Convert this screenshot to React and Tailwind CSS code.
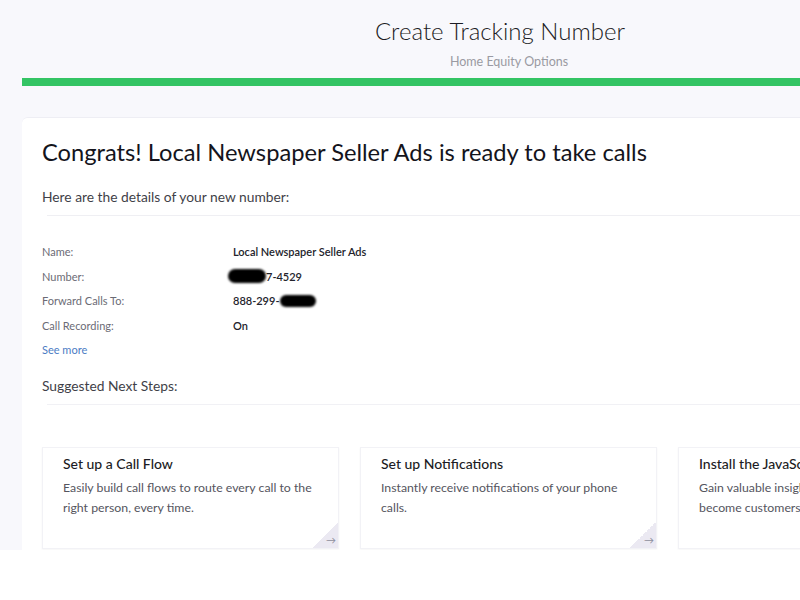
import React from "react";

const details = [
  { label: "Name:", value: "Local Newspaper Seller Ads" },
  { label: "Number:", value: "number" },
  { label: "Forward Calls To:", value: "forward" },
  { label: "Call Recording:", value: "On" },
];

const steps = [
  {
    title: "Set up a Call Flow",
    text: "Easily build call flows to route every call to the right person, every time.",
  },
  {
    title: "Set up Notifications",
    text: "Instantly receive notifications of your phone calls.",
  },
  {
    title: "Install the JavaScript Snippet",
    text: "Gain valuable insights into which visitors become customers.",
  },
];

const Blob = ({ className }) => (
  <span className={`inline-block bg-black rounded-full blur-[1px] ${className}`} />
);

const App = () => {
  return (
    <div
      className="w-[800px] h-[600px] overflow-hidden bg-white"
      style={{ fontFamily: "Lato, 'Noto Sans', sans-serif" }}
    >
      <div className="h-[550px] bg-[#f8f8fc] overflow-hidden">
        <div className="w-[956px] ml-[22px]">
          {/* header */}
          <div className="flex flex-col items-center pt-[15px]">
            <h1 className="text-[24px] leading-[32px] font-light text-[#1c1c24]">
              Create Tracking Number
            </h1>
            <p className="ml-[18px] text-[12.5px] leading-[18px] mt-[6px] text-[#9a9aa2]">
              Home Equity Options
            </p>
          </div>
          <div className="h-[8px] bg-[#34c464] mt-[7px]" />

          {/* card */}
          <div className="mt-[31px] bg-white rounded-tl-md border-t border-[#eeeef4] px-[20px] pt-[19px] h-[440px]">
            <h2 className="text-[23.7px] leading-[30px] text-[#14141c]">
              Congrats! Local Newspaper Seller Ads is ready to take calls
            </h2>
            <p className="mt-[20px] text-[13.8px] leading-[20px] text-[#3f3f48]">
              Here are the details of your new number:
            </p>
            <div className="mt-[8px] ml-[5px] h-px bg-[#efeff3]" />

            <div className="mt-[27px] flex flex-col gap-[7px]">
              {details.map((d) => (
                <div key={d.label} className="flex text-[11px] leading-[17.5px]">
                  <span className="w-[191px] text-[#6b6b75]">{d.label}</span>
                  <span className="font-semibold text-[#23232b] flex items-center">
                    {d.value === "number" ? (
                      <>
                        <Blob className="w-[38px] h-[14px] -ml-[5px]" />
                        <span>7-4529</span>
                      </>
                    ) : d.value === "forward" ? (
                      <>
                        <span>888-299-</span>
                        <Blob className="w-[36px] h-[12px] ml-[1px]" />
                      </>
                    ) : (
                      d.value
                    )}
                  </span>
                </div>
              ))}
            </div>
            <a className="block mt-[7px] text-[11px] leading-[17px] text-[#4b7cc4]">
              See more
            </a>

            <p className="mt-[18px] text-[13.8px] leading-[20px] text-[#3f3f48]">
              Suggested Next Steps:
            </p>
            <div className="mt-[8px] ml-[5px] h-px bg-[#f1f1f5]" />

            <div className="mt-[42px] flex gap-[21px]">
              {steps.map((s) => (
                <div
                  key={s.title}
                  className="relative w-[297px] shrink-0 h-[102px] bg-white border border-[#f2f2f6] shadow-[0_1px_2px_rgba(0,0,0,0.04)] px-[20px] pt-[6px]"
                >
                  <h3 className="text-[14px] leading-[20px] font-medium text-[#1c1c24]">
                    {s.title}
                  </h3>
                  <p className="mt-[4px] text-[12.3px] leading-[20px] text-[#55555e]">
                    {s.text}
                  </p>
                  <div className="absolute right-0 bottom-0 w-[26px] h-[26px] bg-[linear-gradient(135deg,transparent_50%,#ebe9f2_50%)] flex items-end justify-end pr-[2px] pb-[3px]">
                    <span className="text-[10px] leading-none text-[#8e8e9c]">→</span>
                  </div>
                </div>
              ))}
            </div>
          </div>
        </div>
      </div>
    </div>
  );
};

export default App;
